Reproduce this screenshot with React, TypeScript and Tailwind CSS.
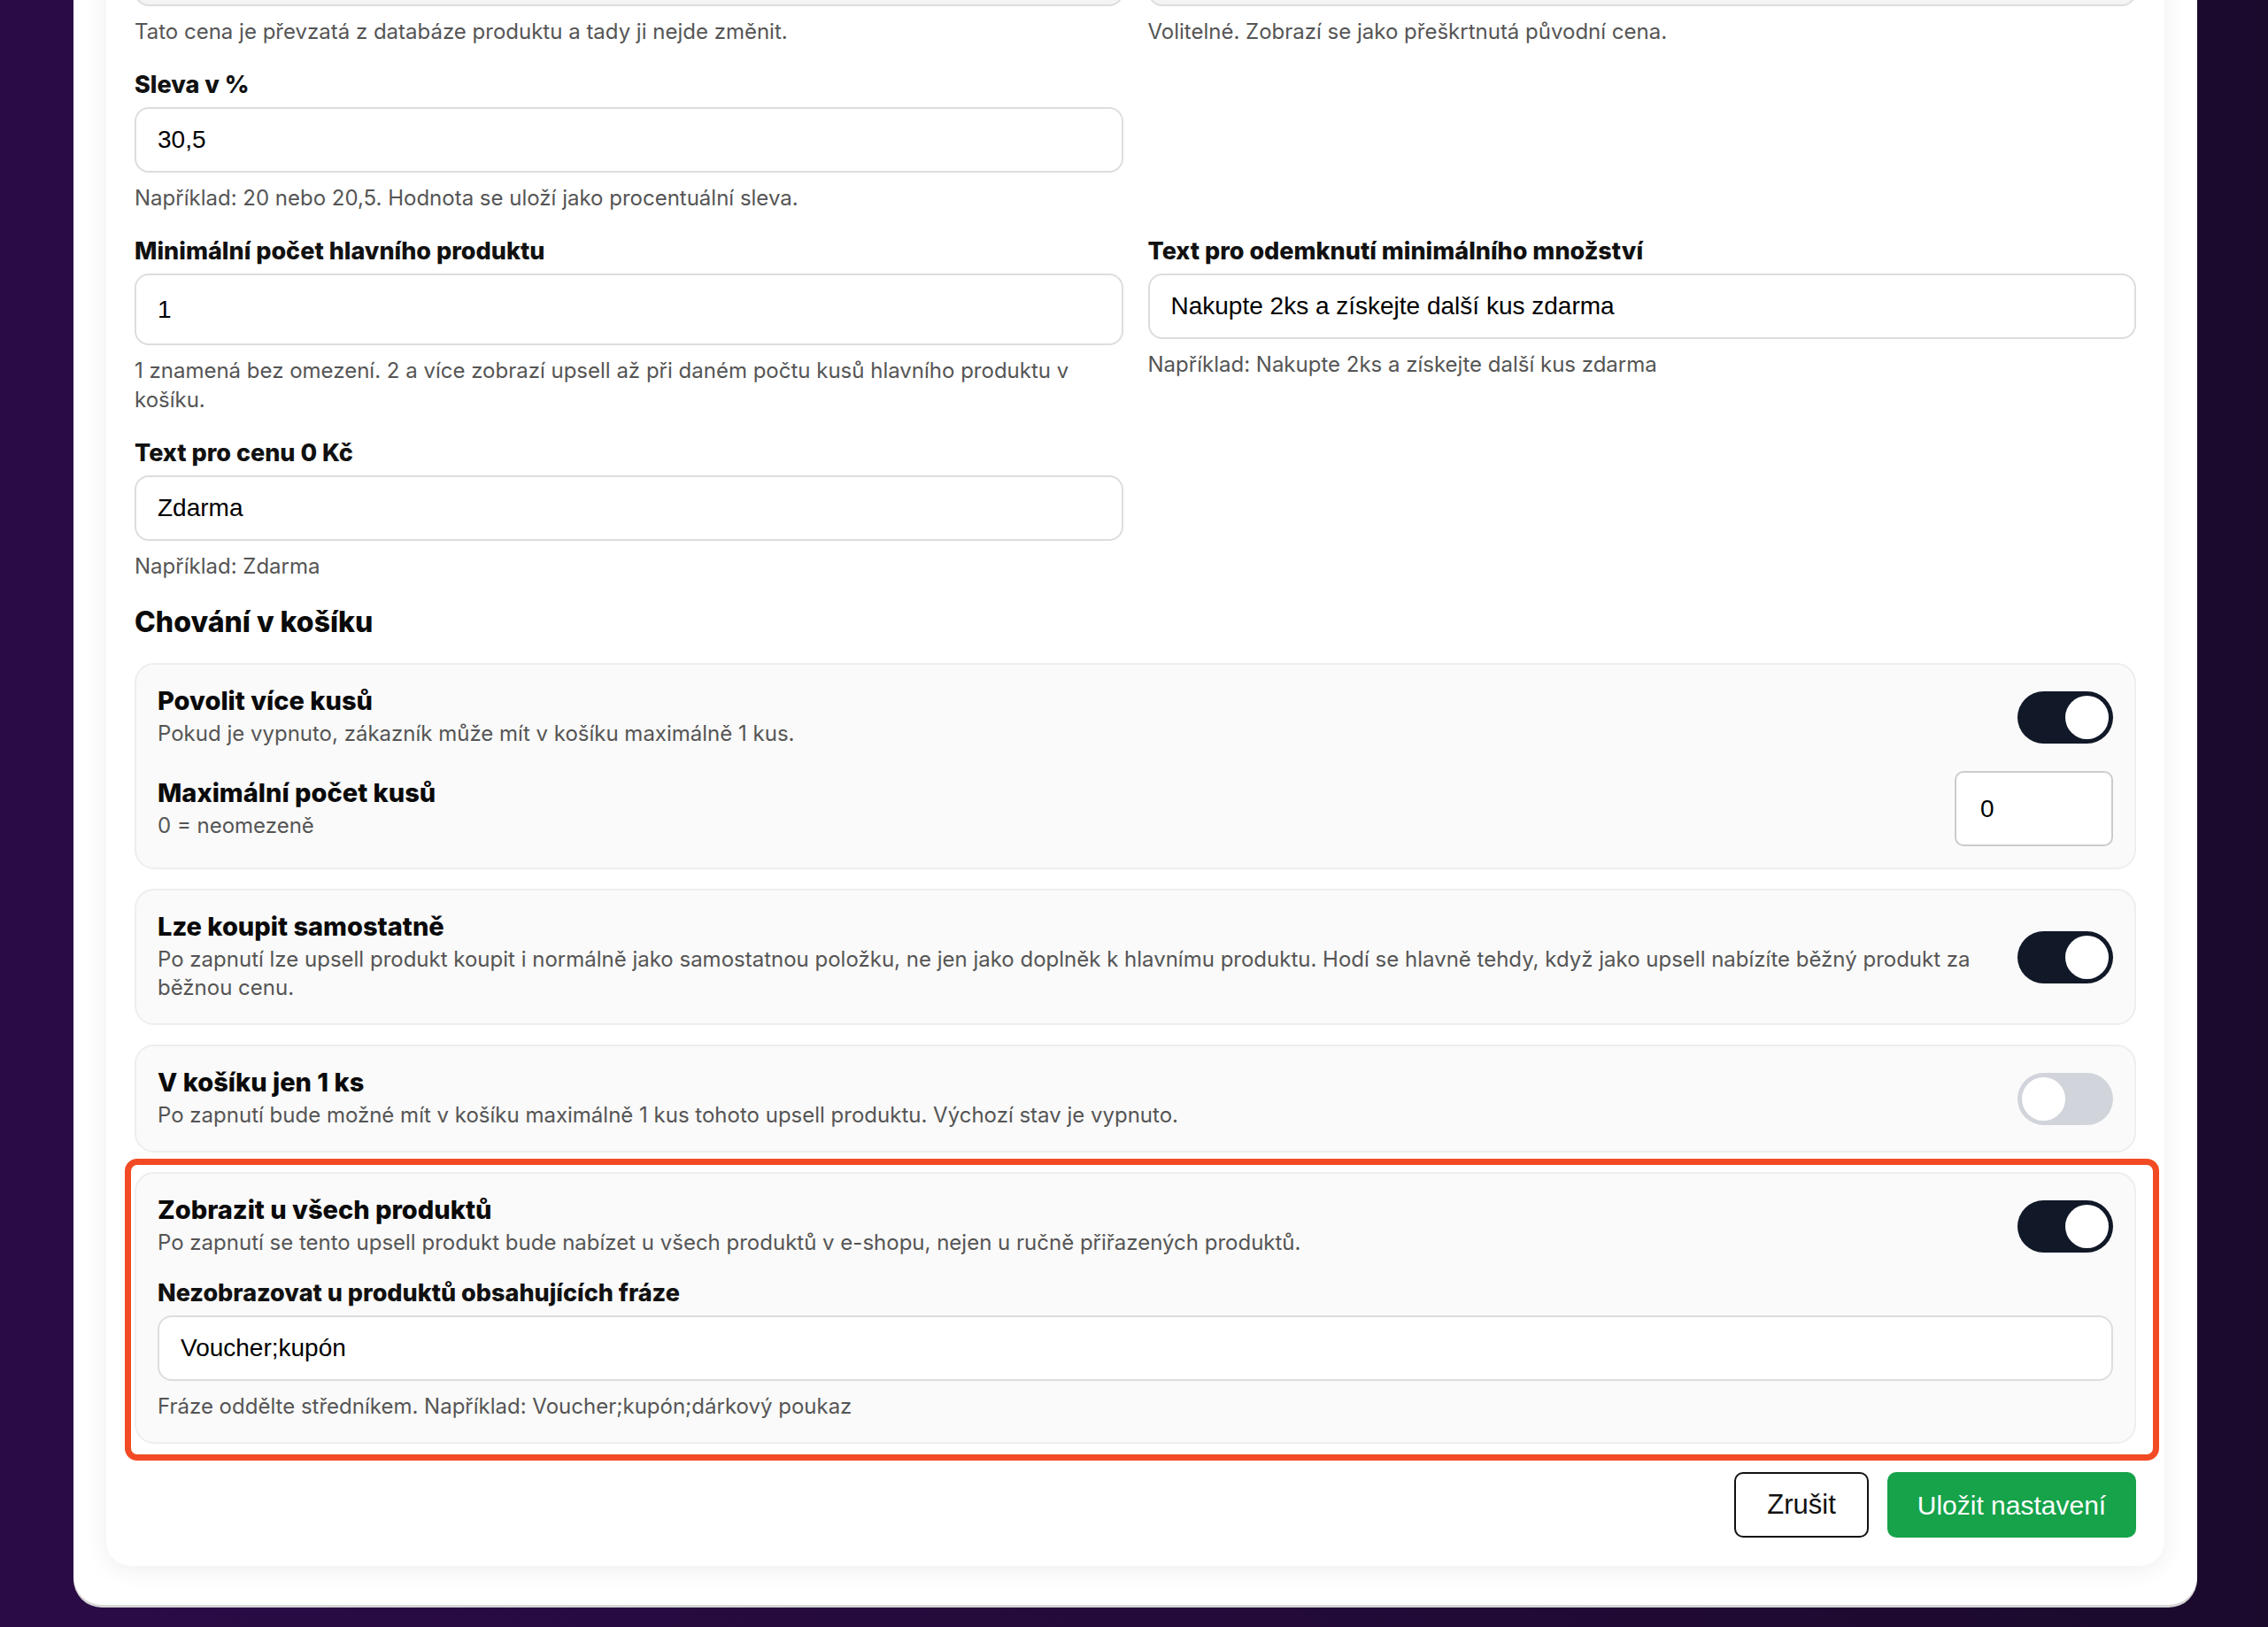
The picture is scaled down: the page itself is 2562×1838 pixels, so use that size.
import React from "react";

const inputFont = "font-['Liberation_Sans',Arial,sans-serif]";

function Label({ children }: { children: React.ReactNode }) {
  return <div className="h-[34px] text-[27px] leading-[34px] font-extrabold text-[#111111]">{children}</div>;
}

function Help({ children }: { children: React.ReactNode }) {
  return <div className="mt-3 text-[24px] leading-[33px] text-[#555555]">{children}</div>;
}

function TextInput({ value, h = "h-[74px]", gray = false }: { value: string; h?: string; gray?: boolean }) {
  return (
    <input
      readOnly
      value={value}
      className={`mt-2 block w-full ${h} rounded-[16px] border-2 border-[#dddddd] ${gray ? "bg-[#f4f4f4]" : "bg-white"} px-6 text-[28px] text-black outline-none ${inputFont}`}
    />
  );
}

function Field({
  label,
  value,
  help,
  h,
  gray,
}: {
  label: string;
  value: string;
  help: string;
  h?: string;
  gray?: boolean;
}) {
  return (
    <div>
      <Label>{label}</Label>
      <TextInput value={value} h={h} gray={gray} />
      <Help>{help}</Help>
    </div>
  );
}

function Toggle({ on }: { on: boolean }) {
  return (
    <div
      className={`flex h-[59px] w-[108px] shrink-0 items-center rounded-full p-[5px] ${
        on ? "justify-end bg-[#111827]" : "justify-start bg-[#d1d5db]"
      }`}
    >
      <div className="h-[49px] w-[49px] rounded-full bg-white" />
    </div>
  );
}

function RowText({ title, desc }: { title: string; desc: string }) {
  return (
    <div className="min-w-0 flex-1">
      <div className="text-[29px] leading-[34px] font-extrabold text-[#0a0a0a]">{title}</div>
      <div className="mt-1 text-[24px] leading-[32px] text-[#555555]">{desc}</div>
    </div>
  );
}

function Card({ children, className = "" }: { children: React.ReactNode; className?: string }) {
  return (
    <div className={`relative rounded-[22px] border-2 border-[#eeeeee] bg-[#fafafa] p-6 ${className}`}>{children}</div>
  );
}

export default function App() {
  return (
    <div className="h-[1838px] w-full overflow-hidden bg-gradient-to-r from-[#2b0b46] via-[#240a3b] to-[#1b0a2c] font-['Inter',sans-serif]">
      <div className="ml-[83px] -mt-[178px] w-[2399px] rounded-b-[32px] bg-white px-[37px] pt-[37px] pb-[44px] shadow-[0_3px_0_#d6d6d6]">
        <div className="rounded-[28px] bg-white p-8 shadow-[0_4px_28px_rgba(0,0,0,0.07)]">
          <div className="grid grid-cols-2 gap-x-[28px] gap-y-[27px]">
            <Field
              label=""
              value=""
              help="Tato cena je převzatá z databáze produktu a tady ji nejde změnit."
              gray
            />
            <Field
              label=""
              value=""
              help="Volitelné. Zobrazí se jako přeškrtnutá původní cena."
              gray
            />
            <Field
              label="Sleva v %"
              value="30,5"
              help="Například: 20 nebo 20,5. Hodnota se uloží jako procentuální sleva."
            />
            <div />
            <Field
              label="Minimální počet hlavního produktu"
              value="1"
              h="h-[81px]"
              help="1 znamená bez omezení. 2 a více zobrazí upsell až při daném počtu kusů hlavního produktu v košíku."
            />
            <Field
              label="Text pro odemknutí minimálního množství"
              value="Nakupte 2ks a získejte další kus zdarma"
              help="Například: Nakupte 2ks a získejte další kus zdarma"
            />
            <Field label="Text pro cenu 0 Kč" value="Zdarma" help="Například: Zdarma" />
          </div>

          <h2 className="mt-[27px] text-[32px] leading-[40px] font-extrabold text-[#0a0a0a]">Chování v košíku</h2>

          <div className="mt-[26px] flex flex-col gap-[22px]">
            <Card className="flex flex-col gap-[26px]">
              <div className="flex items-center gap-8">
                <RowText title="Povolit více kusů" desc="Pokud je vypnuto, zákazník může mít v košíku maximálně 1 kus." />
                <Toggle on />
              </div>
              <div className="flex items-center gap-8">
                <RowText title="Maximální počet kusů" desc="0 = neomezeně" />
                <input
                  readOnly
                  value="0"
                  className={`h-[85px] w-[179px] shrink-0 rounded-[10px] border-2 border-[#cccccc] bg-white pl-[27px] text-[28px] text-black outline-none ${inputFont}`}
                />
              </div>
            </Card>

            <Card>
              <div className="flex items-center gap-8">
                <RowText
                  title="Lze koupit samostatně"
                  desc="Po zapnutí lze upsell produkt koupit i normálně jako samostatnou položku, ne jen jako doplněk k hlavnímu produktu. Hodí se hlavně tehdy, když jako upsell nabízíte běžný produkt za běžnou cenu."
                />
                <Toggle on />
              </div>
            </Card>

            <Card>
              <div className="flex items-center gap-8">
                <RowText
                  title="V košíku jen 1 ks"
                  desc="Po zapnutí bude možné mít v košíku maximálně 1 kus tohoto upsell produktu. Výchozí stav je vypnuto."
                />
                <Toggle on={false} />
              </div>
            </Card>

            <Card>
              <div className="pointer-events-none absolute -top-[17px] -left-[13px] -right-[28px] -bottom-[21px] rounded-[14px] border-[7px] border-[#f24a24]" />
              <div className="flex items-center gap-8">
                <RowText
                  title="Zobrazit u všech produktů"
                  desc="Po zapnutí se tento upsell produkt bude nabízet u všech produktů v e-shopu, nejen u ručně přiřazených produktů."
                />
                <Toggle on />
              </div>
              <div className="mt-6">
                <Label>Nezobrazovat u produktů obsahujících fráze</Label>
                <TextInput value="Voucher;kupón" />
                <Help>Fráze oddělte středníkem. Například: Voucher;kupón;dárkový poukaz</Help>
              </div>
            </Card>
          </div>

          <div className="mt-8 flex justify-end gap-[21px]">
            <button
              className={`h-[74px] w-[152px] rounded-[10px] border-2 border-[#111111] bg-white text-[31px] text-[#111111] ${inputFont}`}
            >
              Zrušit
            </button>
            <button
              className={`h-[74px] w-[281px] rounded-[10px] bg-[#16a34a] text-[30px] text-white ${inputFont}`}
            >
              Uložit nastavení
            </button>
          </div>
        </div>
      </div>
    </div>
  );
}
